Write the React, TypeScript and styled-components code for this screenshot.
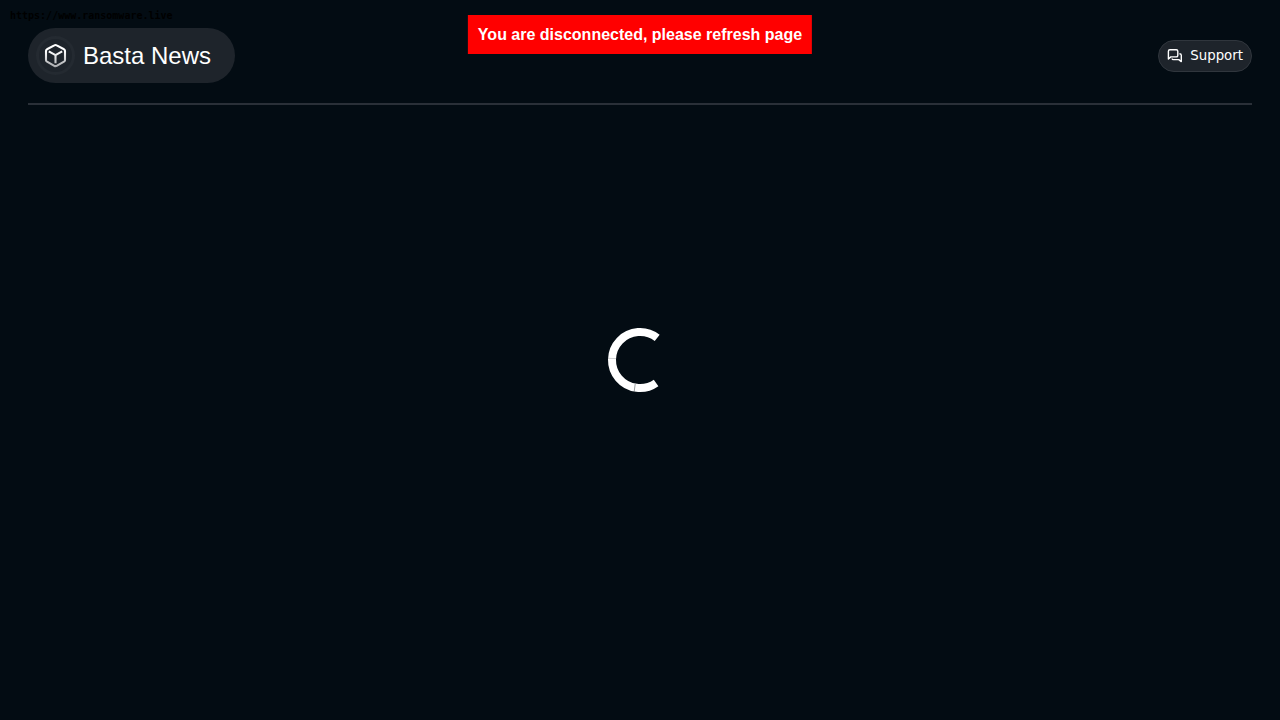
import React from "react";
import styled, { createGlobalStyle } from "styled-components";

const GlobalStyle = createGlobalStyle`
  * { box-sizing: border-box; }
  body {
    margin: 0;
    background: #030c13;
    color: #ffffff;
    font-family: "Liberation Sans", Arial, sans-serif;
  }
`;

const Page = styled.div`
  display: flex;
  flex-direction: column;
  min-height: 100vh;
  padding: 28px;
`;

const Header = styled.header`
  display: flex;
  align-items: center;
  justify-content: space-between;
  padding-bottom: 20px;
  border-bottom: 2px solid #2a3038;
`;

const Brand = styled.a`
  display: flex;
  align-items: center;
  gap: 8px;
  height: 55px;
  padding: 0 24px 0 8px;
  border-radius: 28px;
  background: #1e242b;
  color: #ffffff;
  font-size: 24px;
  line-height: 28px;
  text-decoration: none;
`;

const BrandMark = styled.span`
  display: flex;
  align-items: center;
  justify-content: center;
  width: 39px;
  height: 39px;
  border: 3px solid #242a31;
  border-radius: 50%;
`;

const SupportButton = styled.button`
  display: flex;
  align-items: center;
  gap: 7px;
  height: 32px;
  padding: 0 8px;
  border: 1px solid #30363d;
  border-radius: 16px;
  background: #1e242b;
  color: #ffffff;
  font-family: "DejaVu Sans", sans-serif;
  cursor: pointer;
`;

const Watermark = styled.span`
  position: absolute;
  top: 10px;
  left: 10px;
  color: #000000;
  font: bold 10px/12px "DejaVu Sans Mono", monospace;
`;

const Notice = styled.div`
  position: fixed;
  top: 15px;
  left: 50%;
  transform: translateX(-50%);
  padding: 10px;
  background: #ff0000;
  font-size: 16px;
  font-weight: bold;
  line-height: 19px;
  white-space: nowrap;
`;

const LoadingOverlay = styled.div`
  position: fixed;
  inset: 0;
  display: flex;
  align-items: center;
  justify-content: center;
  pointer-events: none;
`;

const CubeIcon = () => (
  <svg width="33" height="33" viewBox="0 0 33 33" fill="none" aria-hidden="true">
    <defs>
      <linearGradient id="cube" gradientUnits="userSpaceOnUse" x1="16" y1="5" x2="16" y2="28">
        <stop offset="0.3" stopColor="#ffffff" />
        <stop offset="1" stopColor="#a9abae" />
      </linearGradient>
    </defs>
    <g stroke="url(#cube)" strokeWidth="2.1" strokeLinejoin="round">
      <path d="M15.3 6.4Q16.5 5.7 17.7 6.4L25 10.3Q26 10.9 26 12V21Q26 22.1 25 22.7L17.7 26.8Q16.5 27.5 15.3 26.8L8 22.7Q7 22.1 7 21V12Q7 10.9 8 10.3Z" />
      <path d="M9.8 12.4L16.5 16.2L23.2 12.4M16.5 16.2V24.2" />
    </g>
  </svg>
);

const ChatIcon = () => (
  <svg width="16" height="16" viewBox="0 0 16 16" fill="none" stroke="currentColor" strokeWidth="1.4" strokeLinejoin="round" aria-hidden="true">
    <path d="M1.4 11V3.2Q1.4 1.7 2.9 1.7H9.3Q10.8 1.7 10.8 3.2V7.4Q10.8 8.9 9.3 8.9H3.8Z" />
    <path d="M12.4 5.7Q14.3 5.7 14.3 7.2V13.6L11.8 11.6H6.6Q5.1 11.6 5.1 10.4" />
  </svg>
);

const Spinner = () => (
  <svg width="80" height="80" viewBox="-40 -40 80 80" fill="none" role="img" aria-label="Loading">
    <path d="M17.2 -22.1A28 28 0 1 0 16.1 22.9" stroke="#ffffff" strokeWidth="8" />
    <path d="M-32 -1.7L-24 -1.4" stroke="#030c13" strokeWidth="0.2" />
    <path d="M-4.8 24L-5.8 31.5" stroke="#030c13" strokeWidth="0.4" />
  </svg>
);

export default function App() {
  return (
    <>
      <GlobalStyle />
      <Page>
        <Header>
          <Brand href="#">
            <BrandMark>
              <CubeIcon />
            </BrandMark>
            Basta News
          </Brand>
          <SupportButton type="button">
            <ChatIcon />
            Support
          </SupportButton>
        </Header>
      </Page>
      <Watermark>https://www.ransomware.live</Watermark>
      <Notice role="alert">You are disconnected, please refresh page</Notice>
      <LoadingOverlay>
        <Spinner />
      </LoadingOverlay>
    </>
  );
}
